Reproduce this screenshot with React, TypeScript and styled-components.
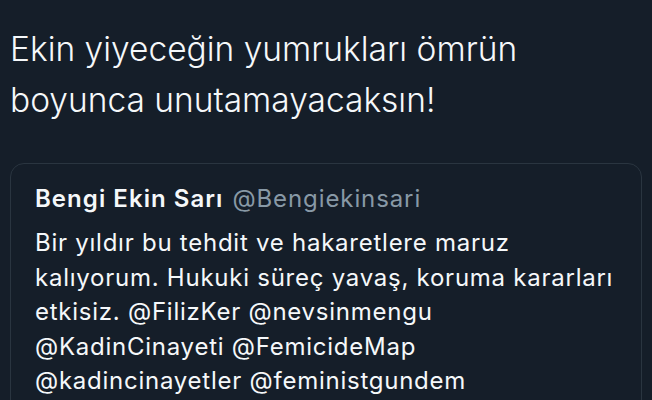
import React from 'react'
import styled, { createGlobalStyle } from 'styled-components'

const GlobalStyle = createGlobalStyle`
    html, body {
        margin: 0;
        padding: 0;
        background: #151e29;
        overflow: hidden;
    }
`

export default function App() {
    return (
        <Page>
            <GlobalStyle />
            <Headline>
                Ekin yiyeceğin yumrukları ömrün
                <br />
                boyunca unutamayacaksın!
            </Headline>
            <QuoteCard>
                <AuthorRow>
                    <Name>Bengi Ekin Sarı</Name>
                    <Handle>@Bengiekinsari</Handle>
                </AuthorRow>
                <Body>
                    Bir yıldır bu tehdit ve hakaretlere maruz
                    <br />
                    kalıyorum. Hukuki süreç yavaş, koruma kararları
                    <br />
                    etkisiz. @FilizKer @nevsinmengu
                    <br />
                    @KadinCinayeti @FemicideMap
                    <br />
                    @kadincinayetler @feministgundem
                </Body>
            </QuoteCard>
        </Page>
    )
}

const Page = styled.div`
    width: 652px;
    height: 400px;
    box-sizing: border-box;
    padding: 24px 10px 0 10px;
    background: #151e29;
    font-family: Inter, "Liberation Sans", sans-serif;
    color: #f5f8fa;
    overflow: hidden;
`

const Headline = styled.div`
    font-size: 33.5px;
    font-weight: 300;
    line-height: 51px;
    margin: 0 0 37px 0;
`

const QuoteCard = styled.div`
    border: 1px solid #2a3540;
    border-radius: 14px;
    padding: 20px 0 0 24px;
    height: 400px;
`

const AuthorRow = styled.div`
    display: flex;
    align-items: baseline;
    gap: 9px;
    font-size: 24px;
    line-height: 30px;
`

const Name = styled.span`
    font-weight: 600;
    letter-spacing: 1.05px;
`

const Handle = styled.span`
    color: #8899a6;
    letter-spacing: 0.9px;
`

const Body = styled.div`
    margin-top: 12px;
    font-size: 24px;
    line-height: 34.5px;
    letter-spacing: 0.75px;
`
